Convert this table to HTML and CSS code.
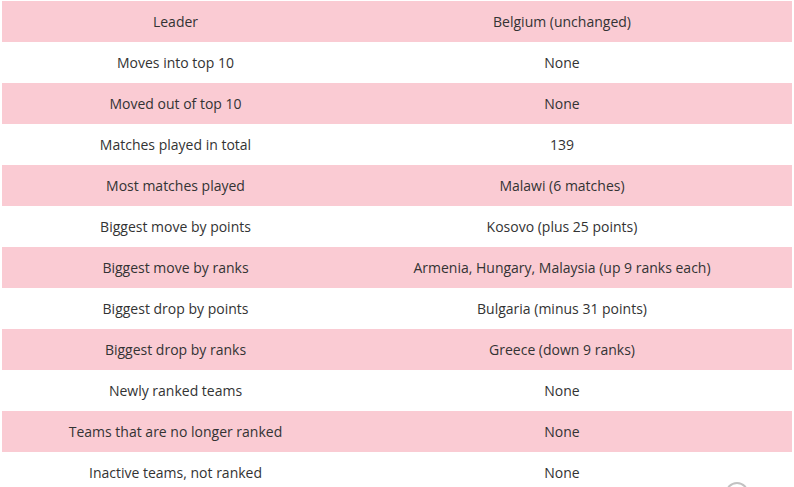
FILE: index.html
```html
<!DOCTYPE html>
<html lang="en">
<head>
<meta charset="utf-8">
<title>Ranking summary</title>
<link rel="stylesheet" href="styles.css">
</head>
<body>
<div class="page">
  <table class="summary">
    <tbody>
      <tr><td class="label">Leader</td><td class="value">Belgium (unchanged)</td></tr>
      <tr><td class="label">Moves into top 10</td><td class="value">None</td></tr>
      <tr><td class="label">Moved out of top 10</td><td class="value">None</td></tr>
      <tr><td class="label">Matches played in total</td><td class="value">139</td></tr>
      <tr><td class="label">Most matches played</td><td class="value">Malawi (6 matches)</td></tr>
      <tr><td class="label">Biggest move by points</td><td class="value">Kosovo (plus 25 points)</td></tr>
      <tr><td class="label">Biggest move by ranks</td><td class="value">Armenia, Hungary, Malaysia (up 9 ranks each)</td></tr>
      <tr><td class="label">Biggest drop by points</td><td class="value">Bulgaria (minus 31 points)</td></tr>
      <tr><td class="label">Biggest drop by ranks</td><td class="value">Greece (down 9 ranks)</td></tr>
      <tr><td class="label">Newly ranked teams</td><td class="value">None</td></tr>
      <tr><td class="label">Teams that are no longer ranked</td><td class="value">None</td></tr>
      <tr><td class="label">Inactive teams, not ranked</td><td class="value">None</td></tr>
    </tbody>
  </table>
  <div class="scroll-top" aria-hidden="true"></div>
</div>
</body>
</html>
```

FILE: styles.css
```css
html, body {
  margin: 0;
  padding: 0;
  background: #ffffff;
  overflow: hidden;
}
body {
  font-family: "Open Sans", "DejaVu Sans", sans-serif;
  font-size: 14px;
  color: #333333;
}
.page {
  position: relative;
  padding: 1px 2px 0 2px;
  width: 790px;
}
.summary {
  border-collapse: collapse;
  width: 790px;
  table-layout: fixed;
}
.summary tr {
  height: 41px;
}
.summary tr:nth-child(odd) {
  background: #facbd3;
}
.summary td {
  padding: 0;
  text-align: center;
  vertical-align: middle;
  line-height: 41px;
  white-space: nowrap;
}
.summary .label {
  width: 347px;
}
.summary .value {
  padding-right: 17px;
}
.scroll-top {
  position: absolute;
  left: 725px;
  top: 482px;
  width: 20px;
  height: 20px;
  border: 2px solid #9a9a9a;
  border-radius: 50%;
  opacity: 0.6;
}
```
